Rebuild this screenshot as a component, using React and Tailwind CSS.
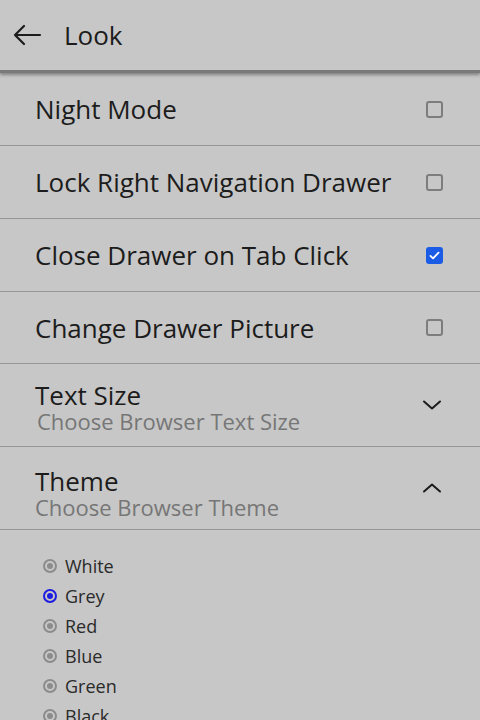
import { useState } from 'react'

const font = { fontFamily: '"Open Sans", "Noto Sans", sans-serif' }

function Check({ checked }) {
  if (checked) {
    return (
      <span className="flex h-[17px] w-[17px] items-center justify-center rounded-[3px] bg-[#1a5ce6]">
        <svg viewBox="0 0 16 16" className="h-[13px] w-[13px]" fill="none" stroke="white" strokeWidth="2.2" strokeLinecap="round" strokeLinejoin="round">
          <path d="M3 8.5l3.2 3L13 4.5" />
        </svg>
      </span>
    )
  }
  return <span className="block h-[17px] w-[17px] rounded-[3px] border-2 border-[#7d7d7d]" />
}

function CheckRow({ label, checked, short }) {
  return (
    <div className={`flex items-center justify-between border-b border-[#969696] pl-[35px] pr-[37px] ${short ? 'h-[72px]' : 'h-[73px]'}`}>
      <span className="text-[26px] leading-[32px] text-[#1c1c1c]">{label}</span>
      <Check checked={checked} />
    </div>
  )
}

function ExpandRow({ title, sub, open, subPad, shift }) {
  return (
    <div className="flex h-[83px] items-center justify-between border-b border-[#969696] pl-[35px] pr-[36px]">
      <div className={`flex flex-col ${shift}`}>
        <span className="text-[26px] leading-[27px] text-[#1c1c1c]">{title}</span>
        <span className={`text-[22px] leading-[25px] text-[#767676] ${subPad ? 'pl-[2px]' : ''}`}>{sub}</span>
      </div>
      <svg viewBox="0 0 24 24" className="h-[24px] w-[24px]" fill="none" stroke="#1c1c1c" strokeWidth="2" strokeLinecap="round" strokeLinejoin="round">
        {open ? <path d="M4 15.5l8-7 8 7" /> : <path d="M4 8.5l8 7 8-7" />}
      </svg>
    </div>
  )
}

export default function App() {
  const [theme, setTheme] = useState('Grey')
  const themes = ['White', 'Grey', 'Red', 'Blue', 'Green', 'Black']

  return (
    <div className="h-[720px] w-[480px] overflow-hidden bg-[#c7c7c7]" style={font}>
      <div className="flex h-[73px] items-center border-b-[3px] border-[#7a7a7a] pl-[12px] shadow-[0_2px_3px_rgba(0,0,0,0.35)]">
        <svg viewBox="0 0 30 24" className="h-[24px] w-[30px]" fill="none" stroke="#1c1c1c" strokeWidth="2.2" strokeLinecap="round" strokeLinejoin="round">
          <path d="M28 12H3M12 3l-9 9 9 9" />
        </svg>
        <span className="ml-[22px] text-[26px] text-[#1c1c1c]">Look</span>
      </div>
      <CheckRow label="Night Mode" />
      <CheckRow label="Lock Right Navigation Drawer" />
      <CheckRow label="Close Drawer on Tab Click" checked />
      <CheckRow label="Change Drawer Picture" short />
      <ExpandRow title="Text Size" sub="Choose Browser Text Size" subPad shift="mt-[6px]" />
      <ExpandRow title="Theme" sub="Choose Browser Theme" open shift="mt-[12px]" />
      <div className="flex flex-col pl-[43px] pt-[21px]">
        {themes.map((t) => (
          <button key={t} onClick={() => setTheme(t)} className="flex h-[30px] items-center">
            <span className={`flex h-[14px] w-[14px] items-center justify-center rounded-full border-2 ${theme === t ? 'border-[#1d1de0]' : 'border-[#8c8c8c]'}`}>
              <span className={`block h-[6px] w-[6px] rounded-full ${theme === t ? 'bg-[#1d1de0]' : 'bg-[#8c8c8c]'}`} />
            </span>
            <span className="ml-[8px] text-[18px] leading-[24px] text-[#2a2a2a]">{t}</span>
          </button>
        ))}
      </div>
    </div>
  )
}
